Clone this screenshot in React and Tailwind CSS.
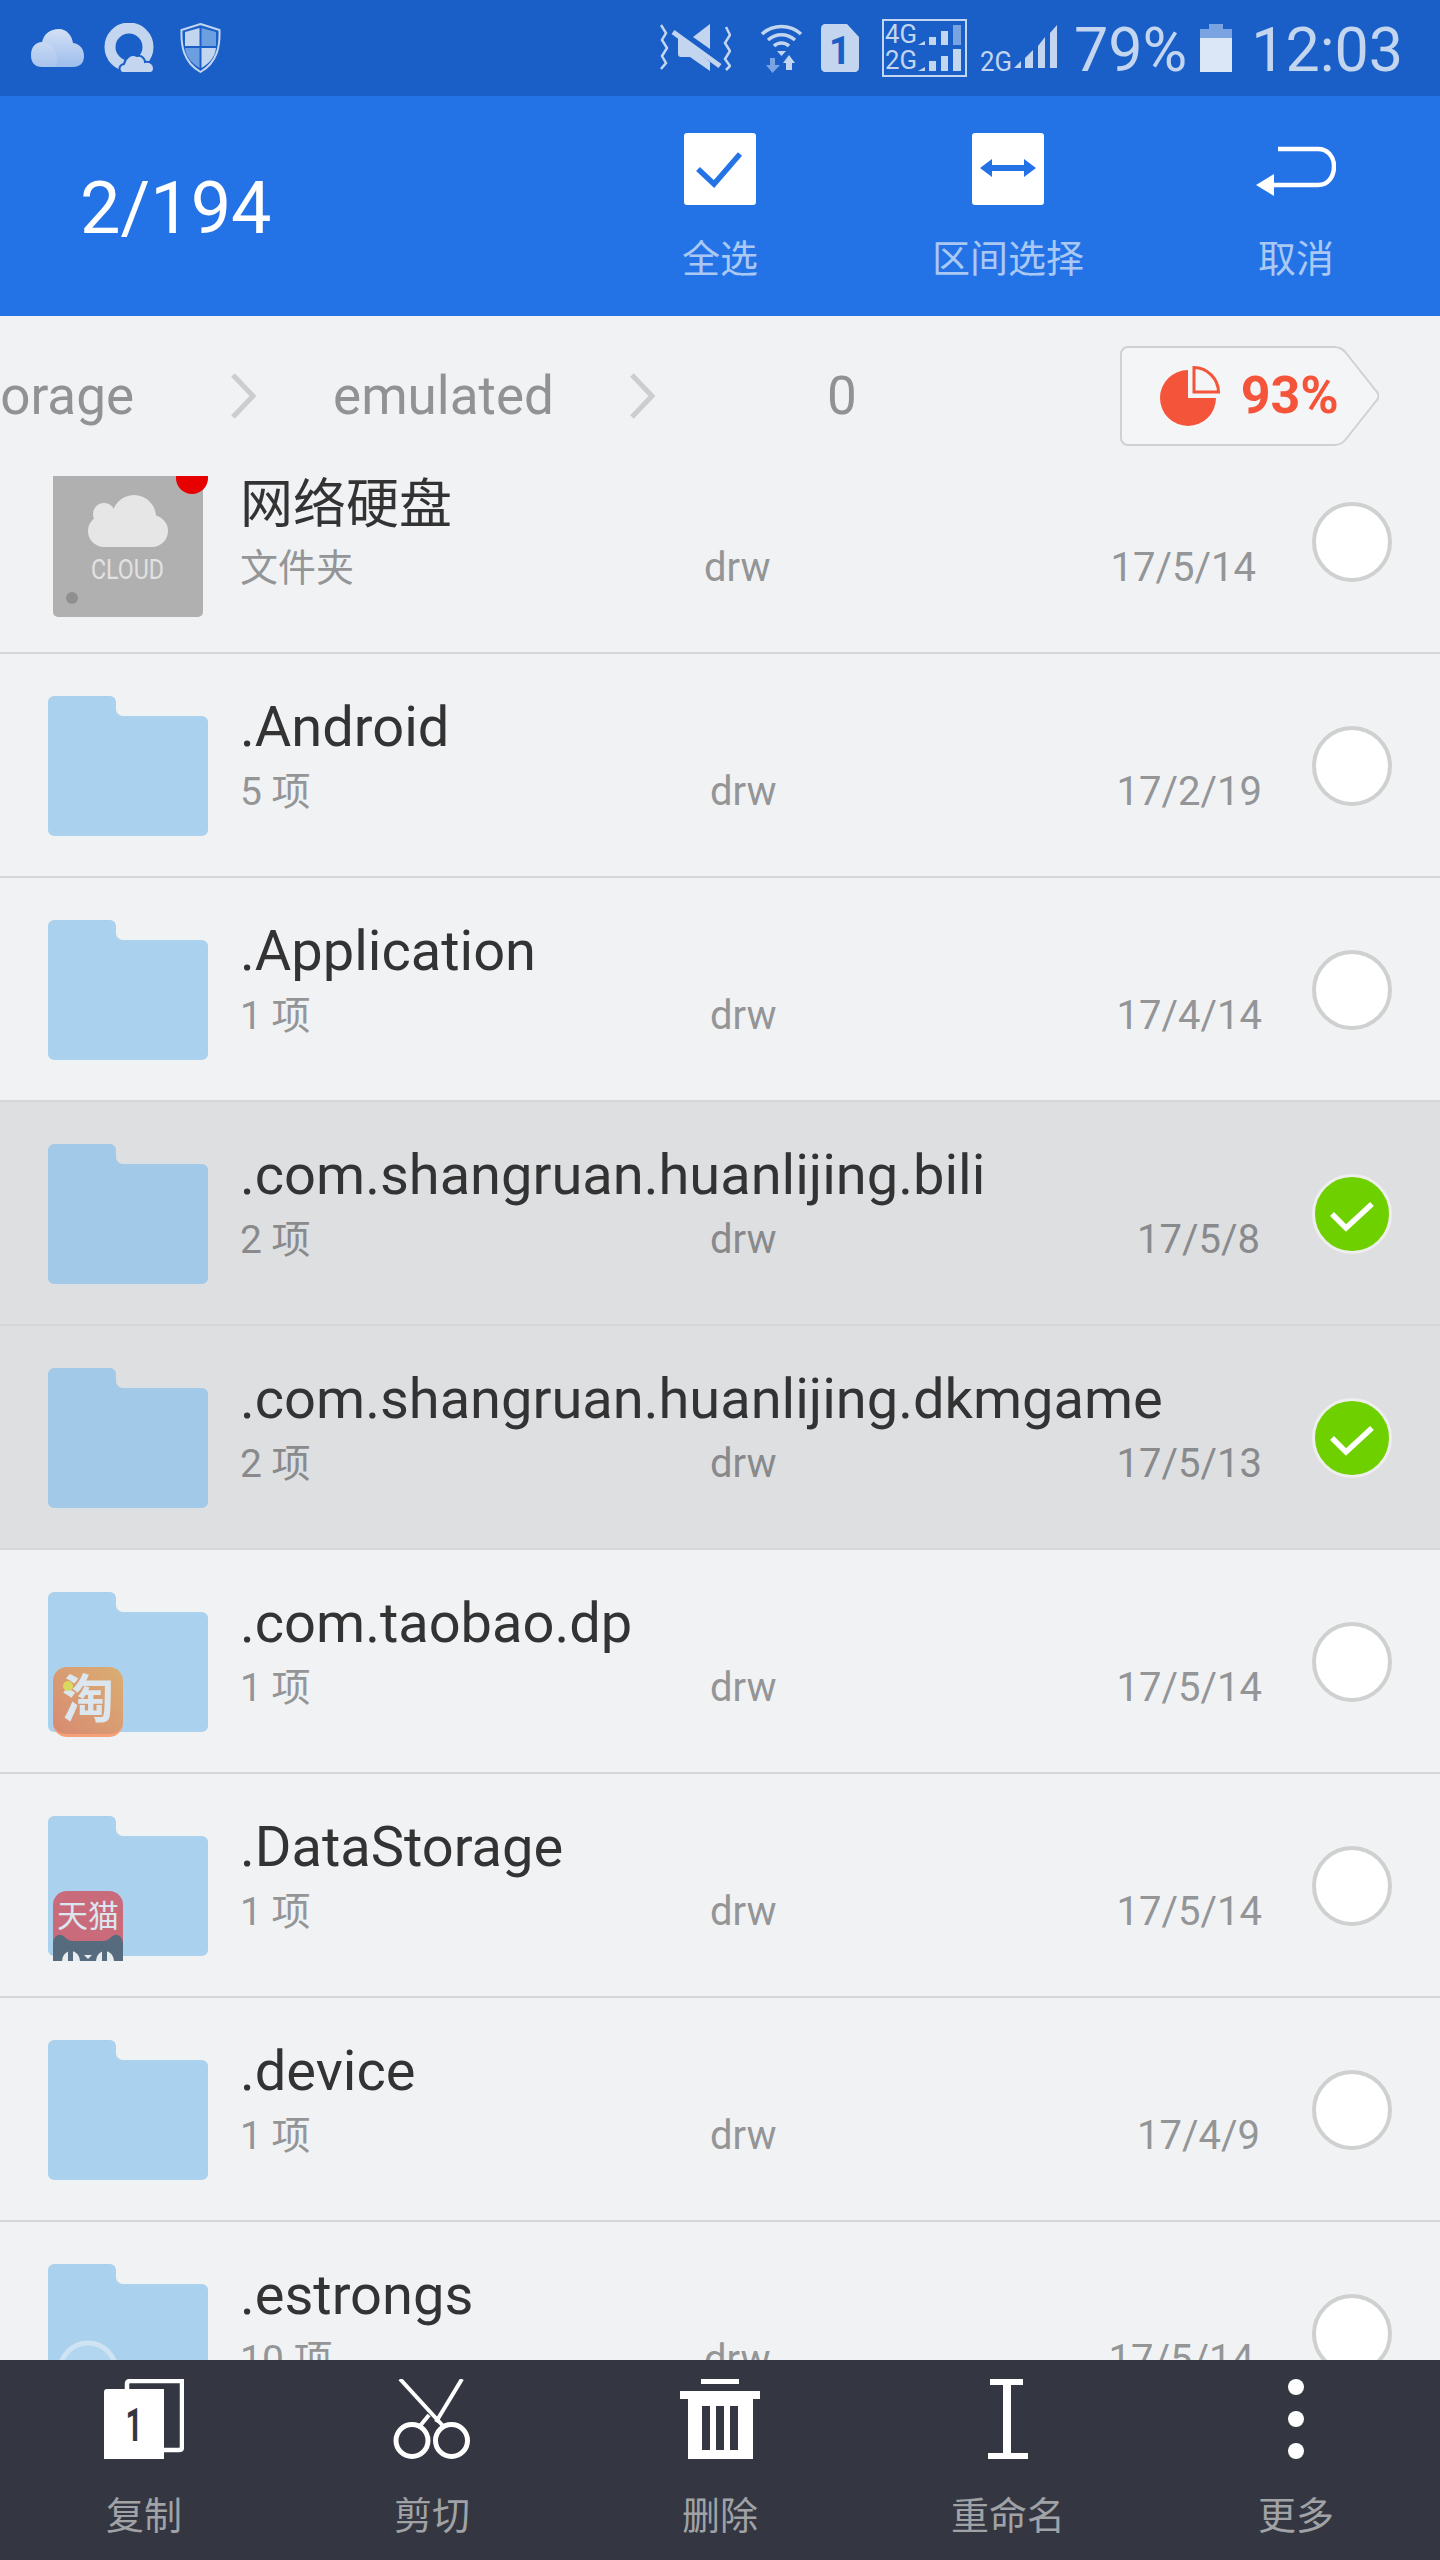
import React from "react";

const SB = "#c3d5ef";
const SBD = "#7aa3e2";

function CloudIcon() {
  return (
    <svg width="53" height="38" viewBox="0 0 53 38">
      <defs>
        <linearGradient id="cg" x1="0" y1="0" x2="0" y2="1">
          <stop offset="0" stopColor="#d3e0f5" />
          <stop offset="1" stopColor="#9dbdec" />
        </linearGradient>
      </defs>
      <path d="M11 38C4 38 0 34 0 26C0 18 5 13 11 13C13 5 19 0 28 0C36 0 41 7 42 14C49 15 53 20 53 27C53 34 49 38 42 38Z" fill="url(#cg)" />
      <path d="M11 13C16 13 26 18 26 30C26 34 25 36 24 38H11C4 38 0 34 0 26C0 18 5 13 11 13Z" fill="#ffffff" fillOpacity="0.12" />
    </svg>
  );
}
function QIcon() {
  return (
    <svg width="50" height="50" viewBox="0 0 50 50">
      <ellipse cx="25" cy="24" rx="19" ry="19" fill="none" stroke={SB} strokeWidth="11" />
      <path d="M20 50C14 50 14 42 20 41C21 35 27 30 33 33C38 32 41 36 41 39C47 38 50 42 50 45C50 48 48 50 46 50Z" fill={SB} stroke="#1a5fc7" strokeWidth="2" />
    </svg>
  );
}
function ShieldIcon() {
  return (
    <svg width="41" height="50" viewBox="0 0 41 50">
      <path d="M20.5 1L39.5 7C40 22 38 39 20.5 49C3 39 1 22 1.5 7Z" fill="#1a5fc7" stroke={SB} strokeWidth="2" />
      <path d="M5 9L19.5 5V23H5Z" fill={SB} />
      <path d="M21.5 5L36 9V23H21.5Z" fill="#6c9fe0" />
      <path d="M5 25H19.5V45C10 39 6 33 5 25Z" fill="#6c9fe0" />
      <path d="M21.5 25H36C35 33 31 39 21.5 45Z" fill={SB} />
    </svg>
  );
}
function MuteIcon() {
  return (
    <svg width="71" height="48" viewBox="0 0 71 48">
      <path d="M1 1L6 9L2 16L7 24L2 32L6 39L1 45" fill="none" stroke={SB} strokeWidth="2.5" />
      <path d="M66 3L70 11L65 19L70 27L65 35L70 42L66 46" fill="none" stroke={SB} strokeWidth="2.5" />
      <path d="M33 13L50 0V25Z" fill={SB} />
      <path d="M18 14V30C18 32 19 33 21 33H30L50 47V38L18 12Z" fill={SB} />
      <path d="M13 8L60 42" stroke={SB} strokeWidth="5" />
    </svg>
  );
}
function WifiIcon() {
  return (
    <svg width="43" height="49" viewBox="0 0 43 49">
      <path d="M2 10C13 0 30 0 41 10" fill="none" stroke={SB} strokeWidth="3.5" />
      <path d="M8 16C16 9 27 9 35 16" fill="none" stroke={SB} strokeWidth="3.5" />
      <path d="M14 22C18 18 25 18 29 22" fill="none" stroke={SB} strokeWidth="3.5" />
      <path d="M21.5 32L17 27H26Z" fill={SB} />
      <path d="M10 34H15V41H20L12.5 49L6 41H10Z" fill={SBD} />
      <path d="M26 46V39H23L29 31L35 39H32V46Z" fill={SB} />
    </svg>
  );
}
function SimIcon() {
  return (
    <svg width="38" height="48" viewBox="0 0 38 48">
      <path d="M4 0H26L38 13V44C38 46 36 48 34 48H4C2 48 0 46 0 44V4C0 2 2 0 4 0Z" fill={SB} />
      <text x="19" y="40" textAnchor="middle" fontSize="38" fontWeight="700" fontFamily="Roboto" fill="#1a5fc7">1</text>
    </svg>
  );
}
function DualIcon() {
  return (
    <svg width="85" height="58" viewBox="0 0 85 58">
      <rect x="1" y="1" width="83" height="56" fill="none" stroke={SB} strokeWidth="2" />
      <text x="3" y="24" fontSize="26" fontFamily="Roboto" fill={SB} textLength="32" lengthAdjust="spacingAndGlyphs">4G</text>
      <text x="3" y="50" fontSize="26" fontFamily="Roboto" fill={SB} textLength="32" lengthAdjust="spacingAndGlyphs">2G</text>
      <path d="M36 26H43V22Z" fill={SB} />
      <rect x="47" y="18" width="7" height="8" fill={SB} />
      <rect x="59" y="12" width="7" height="14" fill={SB} />
      <rect x="71" y="6" width="8" height="20" fill={SBD} />
      <path d="M36 52H43V48Z" fill={SB} />
      <rect x="47" y="42" width="7" height="10" fill={SB} />
      <rect x="59" y="37" width="7" height="15" fill={SB} />
      <rect x="71" y="30" width="8" height="22" fill={SB} />
    </svg>
  );
}
function SigIcon() {
  return (
    <svg width="77" height="46" viewBox="0 0 77 46">
      <text x="0" y="46" fontSize="27" fontFamily="Roboto" fill={SB} textLength="32" lengthAdjust="spacingAndGlyphs">2G</text>
      <path d="M34 43H41V36Z" fill={SB} />
      <path d="M45 43V33L53 25V43Z" fill={SB} />
      <path d="M58 43V21L65 12V43Z" fill={SB} />
      <path d="M70 43V8L77 0V43Z" fill={SB} />
    </svg>
  );
}
function BatteryIcon() {
  return (
    <svg width="32" height="48" viewBox="0 0 32 48">
      <rect x="9" y="0" width="14" height="6" fill={SBD} />
      <rect x="0" y="5" width="32" height="9" fill={SBD} />
      <rect x="0" y="14" width="32" height="34" fill="#dbe6f7" />
    </svg>
  );
}

function Folder({ fill = "#aad1ee" }) {
  return (
    <svg width="160" height="140" viewBox="0 0 160 140" className="block">
      <path d="M0 6A6 6 0 0 1 6 0H62A6 6 0 0 1 68 6V13A7 7 0 0 0 75 20H154A6 6 0 0 1 160 26V134A6 6 0 0 1 154 140H6A6 6 0 0 1 0 134Z" fill={fill} />
    </svg>
  );
}

function CloudDrive() {
  return (
    <svg width="160" height="145" viewBox="0 0 160 145" className="block">
      <rect x="5" y="-10" width="150" height="155" rx="5" fill="#b0b0b0" />
      <circle cx="144" cy="6" r="16" fill="#e60000" />
      <g fill="#e6e6e6">
        <circle cx="86" cy="45" r="22" />
        <circle cx="56" cy="42" r="11" />
        <circle cx="56" cy="59" r="16" />
        <circle cx="104" cy="59" r="16" />
        <rect x="56" y="50" width="48" height="25" />
      </g>
      <text x="43" y="107" fontSize="28" fontFamily="Roboto" fill="#e2e2e2" textLength="73" lengthAdjust="spacingAndGlyphs">CLOUD</text>
      <circle cx="24" cy="126" r="6" fill="#909090" />
    </svg>
  );
}

function Taobao() {
  return (
    <div className="absolute left-[5px] top-[75px] w-[70px] h-[70px] rounded-[14px] bg-gradient-to-tr from-[#d88a72] to-[#d9ae72] border-b-[3px] border-[#f5a078] flex items-center justify-center text-[52px] leading-none font-bold text-[#dbe6ee]">
      淘
      <span className="absolute left-[10px] top-[14px] w-[10px] h-[10px] rounded-full bg-[#d9d860]" />
    </div>
  );
}
function Tmall() {
  return (
    <div className="absolute left-[5px] top-[75px] w-[70px] h-[70px] rounded-t-[14px] bg-[#c96b7a] overflow-hidden flex flex-col items-center">
      <span className="mt-[8px] text-[31px] leading-[36px] text-[#dbe6ee] whitespace-nowrap">天猫</span>
      <svg width="70" height="27" viewBox="0 0 70 27" className="absolute left-0 bottom-0">
        <path d="M0 27V10C0 4 4 0 8 1C12 2 14 7 20 7H50C56 7 58 2 62 1C66 0 70 4 70 10V27Z" fill="#566b7d" />
        <ellipse cx="18" cy="27" rx="9" ry="10" fill="#e8edf0" />
        <ellipse cx="52" cy="27" rx="9" ry="10" fill="#e8edf0" />
        <rect x="15" y="17" width="5" height="10" fill="#566b7d" />
        <rect x="49" y="17" width="5" height="10" fill="#566b7d" />
        <path d="M31 21H39L35 25Z" fill="#e8edf0" />
      </svg>
    </div>
  );
}
function Estrongs() {
  return (
    <svg width="70" height="70" viewBox="0 0 70 70" className="absolute left-[5px] top-[72px]">
      <circle cx="35" cy="35" r="28" fill="#b3d6f0" stroke="#cfe3f2" strokeWidth="5" />
    </svg>
  );
}

const rows = [
  { kind: "cloud", title: "网络硬盘", sub: "文件夹", date: "17/5/14", left: "w-[464px]", right: "pr-[6px]", first: true },
  { title: ".Android", sub: "5 项", date: "17/2/19", left: "w-[470px]", right: "pr-0" },
  { title: ".Application", sub: "1 项", date: "17/4/14", left: "w-[470px]", right: "pr-0" },
  { title: ".com.shangruan.huanlijing.bili", sub: "2 项", date: "17/5/8", left: "w-[470px]", right: "pr-[2px]", sel: true },
  { title: ".com.shangruan.huanlijing.dkmgame", sub: "2 项", date: "17/5/13", left: "w-[470px]", right: "pr-0", sel: true },
  { kind: "taobao", title: ".com.taobao.dp", sub: "1 项", date: "17/5/14", left: "w-[470px]", right: "pr-0" },
  { kind: "tmall", title: ".DataStorage", sub: "1 项", date: "17/5/14", left: "w-[470px]", right: "pr-0" },
  { title: ".device", sub: "1 项", date: "17/4/9", left: "w-[470px]", right: "pr-[2px]" },
  { kind: "es", title: ".estrongs", sub: "10 项", date: "17/5/14", left: "w-[464px]", right: "pr-[8px]" },
];

function Row({ r }) {
  return (
    <div className={`${r.first ? "-mt-[46px]" : ""} ${r.sel ? "bg-[#dedfe1]" : "bg-[#f1f2f4]"} flex h-[224px] shrink-0 pl-[48px] border-b-2 border-[#d5d6d8]`}>
      <div className="relative w-[160px] mt-[42px]">
        {r.kind === "cloud" ? <CloudDrive /> : <Folder fill={r.sel ? "#a2c9e8" : "#aad1ee"} />}
        {r.kind === "taobao" && <Taobao />}
        {r.kind === "tmall" && <Tmall />}
        {r.kind === "es" && <Estrongs />}
      </div>
      <div className="ml-[32px] w-[1022px] pt-[41px]">
        <div className={`${r.first ? "text-[53px] translate-y-[2px]" : "text-[56px]"} leading-[64px] text-[#333333] whitespace-nowrap`}>{r.title}</div>
        <div className={`mt-[9px] flex text-[40px] leading-[48px] ${r.sel ? "text-[#898a8c]" : "text-[#939597]"} ${r.right}`}>
          <span className={`${r.left} ${r.first ? "text-[38px]" : "text-[39px]"}`}>{r.sub}</span>
          <span>drw</span>
          <span className="ml-auto">{r.date}</span>
        </div>
      </div>
      <div className="ml-[50px] mt-[72px]">
        {r.sel ? (
          <svg width="80" height="80" viewBox="0 0 80 80" className="block">
            <circle cx="40" cy="40" r="38.5" fill="#6fd000" stroke="#eeeeee" strokeWidth="3" />
            <path d="M20 40L34 54L60 30" fill="none" stroke="#ffffff" strokeWidth="5.5" />
          </svg>
        ) : (
          <div className="w-[80px] h-[80px] rounded-full bg-white border-[4px] border-[#cfd0d0]" />
        )}
      </div>
    </div>
  );
}

function HeaderAction({ label, children }) {
  return (
    <div className="flex flex-col items-center pt-[37px]">
      <div className="h-[72px] flex items-center justify-center">{children}</div>
      <div className="mt-[30px] text-[38px] leading-[48px] text-[#a9c8f4] whitespace-nowrap">{label}</div>
    </div>
  );
}

function BottomAction({ label, children }) {
  return (
    <div className="flex flex-col items-center pt-[19px]">
      <div className="h-[80px] flex items-center justify-center">{children}</div>
      <div className="mt-[33px] text-[38px] leading-[48px] text-[#a0a2a6] whitespace-nowrap">{label}</div>
    </div>
  );
}

export default function App() {
  return (
    <div className="w-[1440px] h-[2560px] flex flex-col overflow-hidden bg-[#f1f2f4] font-['Roboto','Noto_Sans_CJK_SC',sans-serif]">
      {/* status bar */}
      <div className="h-[96px] shrink-0 bg-[#1a5fc7] flex items-center text-[61px] leading-[70px] text-[#c3d5ef] whitespace-nowrap">
        <div className="ml-[31px] flex"><CloudIcon /></div>
        <div className="ml-[20px] flex"><QIcon /></div>
        <div className="ml-[26px] flex"><ShieldIcon /></div>
        <div className="ml-[439px] flex"><MuteIcon /></div>
        <div className="ml-[29px] flex"><WifiIcon /></div>
        <div className="ml-[18px] flex"><SimIcon /></div>
        <div className="ml-[23px] flex"><DualIcon /></div>
        <div className="ml-[13px] flex"><SigIcon /></div>
        <span className="ml-[17px] mt-[3px]">79%</span>
        <div className="ml-[13px] flex"><BatteryIcon /></div>
        <span className="ml-[19px] mt-[3px]">12:03</span>
      </div>

      {/* action header */}
      <div className="h-[220px] shrink-0 bg-[#2473e6] grid grid-cols-5">
        <div className="col-span-2 pl-[80px] pt-[71px] text-[72px] leading-[84px] text-white">2/194</div>
        <HeaderAction label="全选">
          <svg width="72" height="72" viewBox="0 0 72 72">
            <rect width="72" height="72" rx="3" fill="#ffffff" />
            <path d="M14 36L30 51L56 21" fill="none" stroke="#2473e6" strokeWidth="5.5" />
          </svg>
        </HeaderAction>
        <HeaderAction label="区间选择">
          <svg width="72" height="72" viewBox="0 0 72 72">
            <rect width="72" height="72" rx="3" fill="#ffffff" />
            <path d="M8 35L20 26V32H52V26L64 35L52 44V38H20V44Z" fill="#2473e6" />
          </svg>
        </HeaderAction>
        <HeaderAction label="取消">
          <svg width="80" height="72" viewBox="0 0 80 72">
            <path d="M22 16H62C72 16 78 24 78 33C78 44 72 52 62 52H16" fill="none" stroke="#ffffff" strokeWidth="4.5" />
            <path d="M0 52L18 41V63Z" fill="#ffffff" />
          </svg>
        </HeaderAction>
      </div>

      {/* breadcrumb */}
      <div className="h-[160px] shrink-0 bg-[#f1f2f4] flex items-center text-[53px] leading-[62px] text-[#909294] whitespace-nowrap overflow-hidden">
        <span className="-ml-[44px]">storage</span>
        <svg width="26" height="46" viewBox="0 0 26 46" className="ml-[96px] shrink-0">
          <path d="M3 2L23 23L3 44" fill="none" stroke="#cccdcf" strokeWidth="5" />
        </svg>
        <span className="ml-[77px]">emulated</span>
        <svg width="26" height="46" viewBox="0 0 26 46" className="ml-[75px] shrink-0">
          <path d="M3 2L23 23L3 44" fill="none" stroke="#cccdcf" strokeWidth="5" />
        </svg>
        <span className="ml-[172px]">0</span>
        <div className="relative ml-[263px] w-[259px] h-[100px] shrink-0 flex items-center">
          <svg width="259" height="100" viewBox="0 0 259 100" className="absolute left-0 top-0">
            <path d="M8 1H214C218 1 223 3 226 7L257 46C259 48 259 52 257 54L226 93C223 97 218 99 214 99H8C4 99 1 96 1 92V8C1 4 4 1 8 1Z" fill="#f4f5f7" stroke="#d0d1d3" strokeWidth="2" />
          </svg>
          <svg width="60" height="60" viewBox="0 0 60 60" className="relative ml-[40px] shrink-0">
            <path d="M28 4A28 28 0 1 0 56 32H28Z" fill="#f4553a" />
            <path d="M34 1.5A25 25 0 0 1 58.5 26H34Z" fill="none" stroke="#f4553a" strokeWidth="3" />
          </svg>
          <span className="relative ml-[21px] text-[52px] font-bold text-[#f4553a]">93%</span>
        </div>
      </div>

      {/* list */}
      <div className="flex-1 min-h-0 overflow-hidden flex flex-col">
        {rows.map((r) => (
          <Row key={r.title} r={r} />
        ))}
      </div>

      {/* bottom bar */}
      <div className="h-[200px] shrink-0 bg-[#343741] grid grid-cols-5">
        <BottomAction label="复制">
          <svg width="80" height="80" viewBox="0 0 80 80">
            <path d="M23 10V5C23 3 24 2 26 2H78V68C78 70 77 71 75 71H60" fill="none" stroke="#ffffff" strokeWidth="4.5" />
            <path d="M3 10H60V80H0V13C0 11 1 10 3 10Z" fill="#ffffff" />
            <text x="30" y="62" textAnchor="middle" fontSize="46" fontWeight="700" fontFamily="Roboto" fill="#343741" textLength="17" lengthAdjust="spacingAndGlyphs">1</text>
          </svg>
        </BottomAction>
        <BottomAction label="剪切">
          <svg width="78" height="80" viewBox="0 0 78 80">
            <circle cx="19" cy="61.5" r="16" fill="none" stroke="#ffffff" strokeWidth="5" />
            <circle cx="58.5" cy="61.5" r="16" fill="none" stroke="#ffffff" strokeWidth="5" />
            <path d="M7 0L51 48" fill="none" stroke="#ffffff" strokeWidth="4" />
            <path d="M69 0L43 43" fill="none" stroke="#ffffff" strokeWidth="4" />
            <path d="M36 36L27 47" fill="none" stroke="#ffffff" strokeWidth="4" />
          </svg>
        </BottomAction>
        <BottomAction label="删除">
          <svg width="80" height="80" viewBox="0 0 80 80">
            <rect x="21" y="0" width="38" height="5" fill="#ffffff" />
            <rect x="0" y="12" width="80" height="8" fill="#ffffff" />
            <rect x="8" y="20" width="65" height="60" fill="#ffffff" />
            <rect x="22" y="27" width="8" height="44" fill="#343741" />
            <rect x="36" y="27" width="8" height="44" fill="#343741" />
            <rect x="50" y="27" width="8" height="44" fill="#343741" />
          </svg>
        </BottomAction>
        <BottomAction label="重命名">
          <svg width="40" height="80" viewBox="0 0 40 80">
            <rect x="2" y="0" width="33" height="6" fill="#ffffff" />
            <rect x="15" y="6" width="8" height="68" fill="#ffffff" />
            <rect x="0" y="74" width="40" height="6" fill="#ffffff" />
          </svg>
        </BottomAction>
        <BottomAction label="更多">
          <svg width="18" height="80" viewBox="0 0 18 80">
            <circle cx="9" cy="8" r="8" fill="#ffffff" />
            <circle cx="9" cy="40" r="8" fill="#ffffff" />
            <circle cx="9" cy="72" r="8" fill="#ffffff" />
          </svg>
        </BottomAction>
      </div>
    </div>
  );
}
